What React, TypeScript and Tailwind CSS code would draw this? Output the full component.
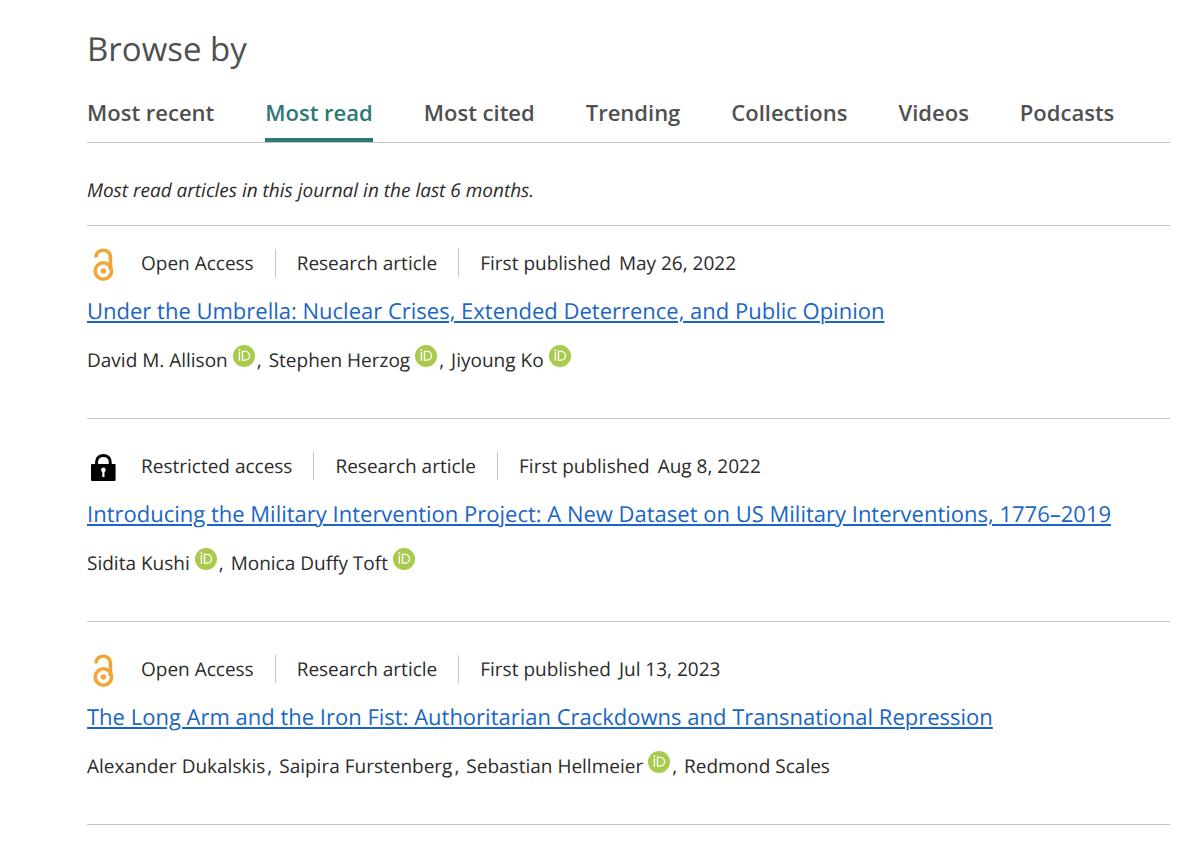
import { useState } from 'react';

interface Author {
  name: string;
  orcid?: boolean;
}

interface Article {
  access: 'open' | 'restricted';
  published: string;
  title: string;
  authors: Author[];
}

const TABS = ['Most recent', 'Most read', 'Most cited', 'Trending', 'Collections', 'Videos', 'Podcasts'];

const ARTICLES: Article[] = [
  {
    access: 'open',
    published: 'May 26, 2022',
    title: 'Under the Umbrella: Nuclear Crises, Extended Deterrence, and Public Opinion',
    authors: [
      { name: 'David M. Allison', orcid: true },
      { name: 'Stephen Herzog', orcid: true },
      { name: 'Jiyoung Ko', orcid: true },
    ],
  },
  {
    access: 'restricted',
    published: 'Aug 8, 2022',
    title: 'Introducing the Military Intervention Project: A New Dataset on US Military Interventions, 1776–2019',
    authors: [
      { name: 'Sidita Kushi', orcid: true },
      { name: 'Monica Duffy Toft', orcid: true },
    ],
  },
  {
    access: 'open',
    published: 'Jul 13, 2023',
    title: 'The Long Arm and the Iron Fist: Authoritarian Crackdowns and Transnational Repression',
    authors: [
      { name: 'Alexander Dukalskis' },
      { name: 'Saipira Furstenberg' },
      { name: 'Sebastian Hellmeier', orcid: true },
      { name: 'Redmond Scales' },
    ],
  },
];

function OpenAccessIcon() {
  return (
    <svg viewBox="0 0 32 36" className="h-9 w-8 shrink-0" fill="none" aria-hidden="true">
      <path d="M9 12.5V11.4a7.2 6.2 0 0 1 14.4 0V25" stroke="#f0a73a" strokeWidth="3.6" />
      <circle cx="16.4" cy="26" r="8.2" stroke="#f0a73a" strokeWidth="3.6" />
      <circle cx="16.4" cy="26" r="2.8" fill="#f0a73a" />
    </svg>
  );
}

function LockIcon() {
  return (
    <svg viewBox="0 0 32 36" className="h-9 w-8 shrink-0" fill="none" aria-hidden="true">
      <path d="M9.6 18V13.4a6.8 6 0 0 1 13.6 0V18" stroke="#000" strokeWidth="3" />
      <rect x="4" y="16" width="24.6" height="17" rx="1" fill="#000" />
      <path d="M16.4 19.6a2.4 2.4 0 0 0-1.1 4.5V29h2.2v-4.9a2.4 2.4 0 0 0-1.1-4.5Z" fill="#fff" />
    </svg>
  );
}

function OrcidIcon() {
  return (
    <svg viewBox="0 0 22 22" className="mb-2 ml-[5px] size-[22px]" fill="none" role="img" aria-label="ORCID">
      <circle cx="11" cy="11" r="11" fill="#a9ca4d" />
      <circle cx="6.4" cy="5.2" r="1" fill="#fff" />
      <path d="M6.4 7.3V15.8M9.5 6.4h2.7a4.3 4.3 0 0 1 0 8.7H9.5Z" stroke="#fff" strokeWidth="1.4" />
    </svg>
  );
}

function ArticleItem({ article }: { article: Article }) {
  const open = article.access === 'open';
  return (
    <li className="border-t border-[#c4c4c4] pt-[31px] pb-[42px] first:pt-[21px]">
      <div className="flex h-8 items-center text-[19px]">
        {open ? <OpenAccessIcon /> : <LockIcon />}
        <span className="ml-[22px]">{open ? 'Open Access' : 'Restricted access'}</span>
        <span className="ml-[21px] border-l border-[#c4c4c4] pl-[21px]">Research article</span>
        <span className="ml-[21px] border-l border-[#c4c4c4] pl-[21px]">First published</span>
        <time className="ml-2">{article.published}</time>
      </div>
      <h3 className="mt-4 text-[22px] leading-8">
        <a href="#" className="text-[#1b66c4] underline decoration-2 underline-offset-2">
          {article.title}
        </a>
      </h3>
      <ul className="mt-[17px] flex h-8 items-center text-[19px]">
        {article.authors.map((author, i) => (
          <li key={author.name} className="mr-[7px] flex items-center">
            {author.name}
            {author.orcid && <OrcidIcon />}
            {i < article.authors.length - 1 && <span className="ml-[2px]">,</span>}
          </li>
        ))}
      </ul>
    </li>
  );
}

export default function App() {
  const [activeTab, setActiveTab] = useState('Most read');

  return (
    <main className="min-h-screen bg-white pt-7 pr-[30px] pl-[87px] font-['Open_Sans',sans-serif] text-[#2b2b2b] [text-rendering:geometricPrecision]">
      <h2 className="text-[33px] leading-[42px] text-[#505050]">Browse by</h2>
      <div role="tablist" className="mt-[26px] flex gap-[51px] border-b border-[#c4c4c4]">
        {TABS.map((tab) => (
          <button
            key={tab}
            role="tab"
            aria-selected={tab === activeTab}
            onClick={() => setActiveTab(tab)}
            className={`border-b-4 pb-[10px] text-[22px] leading-8 font-semibold ${
              tab === activeTab ? 'border-[#2f7775] text-[#2f7775]' : 'border-transparent text-[#505050]'
            }`}
          >
            {tab}
          </button>
        ))}
      </div>
      <p className="mt-8 mb-5 text-[19px] leading-[30px] italic">Most read articles in this journal in the last 6 months.</p>
      <ul className="border-b border-[#c4c4c4]">
        {ARTICLES.map((article) => (
          <ArticleItem key={article.title} article={article} />
        ))}
      </ul>
    </main>
  );
}
